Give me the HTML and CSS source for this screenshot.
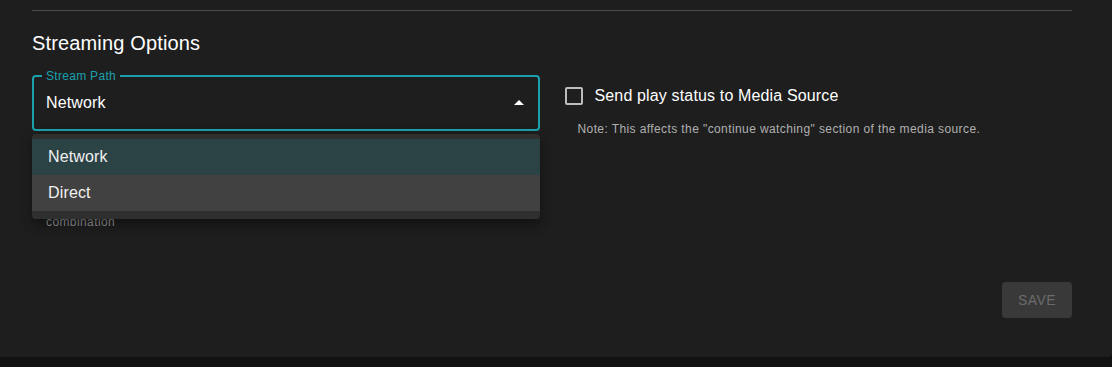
FILE: index.html
```html
<!DOCTYPE html>
<html>

<head>
    <title>Streaming Options</title>
    <link rel="stylesheet" href="styles.css">
</head>

<body>
    <div class="paper">
        <hr class="divider">
        <h2 class="title">Streaming Options</h2>

        <div class="row">
            <div class="column">
                <div class="field focused">
                    <span class="legend">Stream Path</span>
                    <span class="value">Network</span>
                    <svg class="arrow" viewBox="0 0 24 24" width="24" height="24">
                        <path d="M7 14l5-5 5 5z" fill="#fff"></path>
                    </svg>
                    <ul class="menu">
                        <li class="item selected">Network</li>
                        <li class="item hover">Direct</li>
                    </ul>
                </div>
                <div class="field under"></div>
                <p class="helper">combination</p>
            </div>
            <div class="column right">
                <label class="check">
                    <span class="box"></span>
                    <span>Send play status to Media Source</span>
                </label>
                <p class="note">Note: This affects the "continue watching" section of the media source.</p>
            </div>
        </div>

        <div class="actions">
            <button class="save" disabled>Save</button>
        </div>
    </div>
</body>

</html>
```

FILE: styles.css
```css
* {
    box-sizing: border-box;
}

body {
    margin: 0;
    background: #121212;
    font-family: "Liberation Sans", Arial, sans-serif;
    color: #fff;
}

.paper {
    background: #1e1e1e;
    height: 357px;
    padding: 10px 40px 0 32px;
    border-radius: 0 0 4px 0;
}

.divider {
    margin: 0;
    border: none;
    border-top: 1px solid #4a4a4a;
}

.title {
    margin: 16px 0 16px;
    font-size: 20px;
    font-weight: 400;
    line-height: 32px;
    letter-spacing: 0.15px;
}

.row {
    display: flex;
    gap: 25px;
}

.column {
    width: 508px;
}

.field {
    position: relative;
    height: 56px;
    border: 1px solid #4a4a4a;
    border-radius: 4px;
    padding: 0 14px;
    display: flex;
    align-items: center;
}

.field.focused {
    border: 2px solid #1ca0ae;
    padding: 0 12px;
}

.field.under {
    margin-top: 20px;
}

.legend {
    position: absolute;
    top: -8px;
    left: 8px;
    padding: 0 4px;
    background: #1e1e1e;
    font-size: 12px;
    line-height: 14px;
    letter-spacing: 0.3px;
    color: #1ca0ae;
}

.value {
    font-size: 16px;
    letter-spacing: 0.15px;
    flex: 1;
}

.arrow {
    margin-right: -5px;
}

.menu {
    position: absolute;
    top: 57px;
    left: -2px;
    width: 508px;
    margin: 0;
    padding: 5px 0 8px;
    list-style: none;
    background: #2f2f2f;
    border-radius: 4px;
    box-shadow: 0 5px 5px -3px rgba(0, 0, 0, 0.2), 0 8px 10px 1px rgba(0, 0, 0, 0.14), 0 3px 14px 2px rgba(0, 0, 0, 0.12);
    z-index: 2;
}

.item {
    height: 36px;
    line-height: 36px;
    padding: 0 16px;
    font-size: 16px;
    letter-spacing: 0.15px;
    color: #f0f0f0;
}

.item.selected {
    background: #2c4346;
}

.item.hover {
    background: #414141;
}

.helper {
    margin: 5px 14px 0;
    font-size: 12px;
    line-height: 20px;
    letter-spacing: 0.4px;
    color: #909090;
}

.right {
    padding-top: 10px;
}

.check {
    display: flex;
    align-items: center;
    gap: 12px;
    font-size: 16px;
    line-height: 22px;
    letter-spacing: 0.15px;
}

.box {
    width: 18px;
    height: 18px;
    border: 2px solid #bdbdbd;
    border-radius: 2px;
}

.note {
    margin: 13px 0 0 13px;
    font-size: 12px;
    line-height: 18px;
    letter-spacing: 0.4px;
    color: #b0b0b0;
}

.actions {
    display: flex;
    justify-content: flex-end;
    margin-top: 50px;
}

.save {
    width: 70px;
    height: 36px;
    border: none;
    border-radius: 4px;
    background: #393939;
    color: #6b6b6b;
    font-family: inherit;
    font-size: 14px;
    letter-spacing: 0.4px;
    text-transform: uppercase;
}
```
